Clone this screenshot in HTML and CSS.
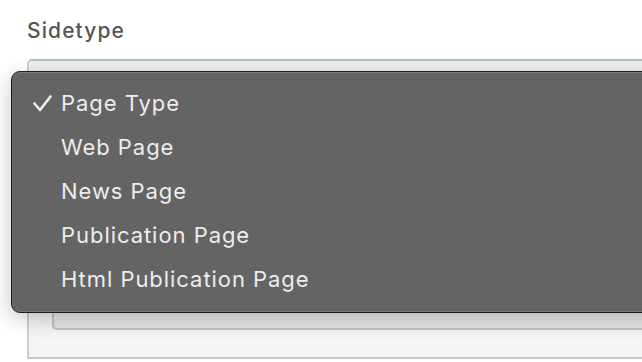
FILE: index.html
```html
<!DOCTYPE html>
<html lang="en">
<head>
    <meta charset="UTF-8">
    <meta name="viewport" content="width=device-width, initial-scale=1.0">
    <title>Sidetype</title>
    <link rel="stylesheet" href="styles.css">
</head>
<body>
    <div class="field">
        <label class="field-label">Sidetype</label>
        <div class="select-box">
            <div class="select-inner"></div>
        </div>
    </div>

    <ul class="menu">
        <li class="menu-item selected">
            <span class="check">
                <svg width="19" height="17" viewBox="0 0 19 17"><path d="M1.5 8.5 L7 15 L17.5 1.5" fill="none" stroke="#ededed" stroke-width="2.6" stroke-linecap="round" stroke-linejoin="round"/></svg>
            </span>Page Type
        </li>
        <li class="menu-item"><span class="check"></span>Web Page</li>
        <li class="menu-item"><span class="check"></span>News Page</li>
        <li class="menu-item"><span class="check"></span>Publication Page</li>
        <li class="menu-item"><span class="check"></span>Html Publication Page</li>
    </ul>
</body>
</html>
```

FILE: styles.css
```css
body {
    margin: 0;
    background: #fff;
    font-family: Inter, "Noto Sans", sans-serif;
    overflow: hidden;
    height: 362px;
}
.field {
    padding: 17px 0 0 27px;
}
.field-label {
    display: block;
    font-size: 21px;
    font-weight: 500;
    color: #555;
    letter-spacing: 1.1px;
    line-height: 28px;
}
.select-box {
    margin-top: 14px;
    height: 296px;
    border-left: 2px solid #cfcfcf;
    border-top: 2px solid #b5c1c1;
    border-bottom: 2px solid #c9c9c9;
    border-top-left-radius: 5px;
    background: linear-gradient(#eef2f2, #f5f5f5);
    padding: 0 0 0 23px;
}
.select-inner {
    margin-top: 14px;
    height: 253px;
    border-left: 2px solid #c4c4c4;
    border-bottom: 2px solid #c4c4c4;
    border-bottom-left-radius: 5px;
    background: linear-gradient(to bottom, #f0f0f0 85%, #e4e4e4);
}
.menu {
    position: absolute;
    left: 11px;
    top: 71px;
    width: 660px;
    height: 242px;
    margin: 0;
    padding: 9px 0 0 0;
    box-sizing: border-box;
    list-style: none;
    background: #646464;
    border: 1px solid #1c1c1c;
    border-radius: 9px;
    box-shadow: inset 0 1px 0 #7c7c7c, inset 0 -1px 0 #7a7a7a, 0 6px 22px rgba(0, 0, 0, 0.22);
}
.menu-item {
    display: flex;
    align-items: center;
    height: 44px;
    font-size: 22px;
    color: #ededed;
    letter-spacing: 0.95px;
}
.check {
    display: flex;
    align-items: center;
    width: 49px;
    padding-left: 21px;
    box-sizing: border-box;
}
```
